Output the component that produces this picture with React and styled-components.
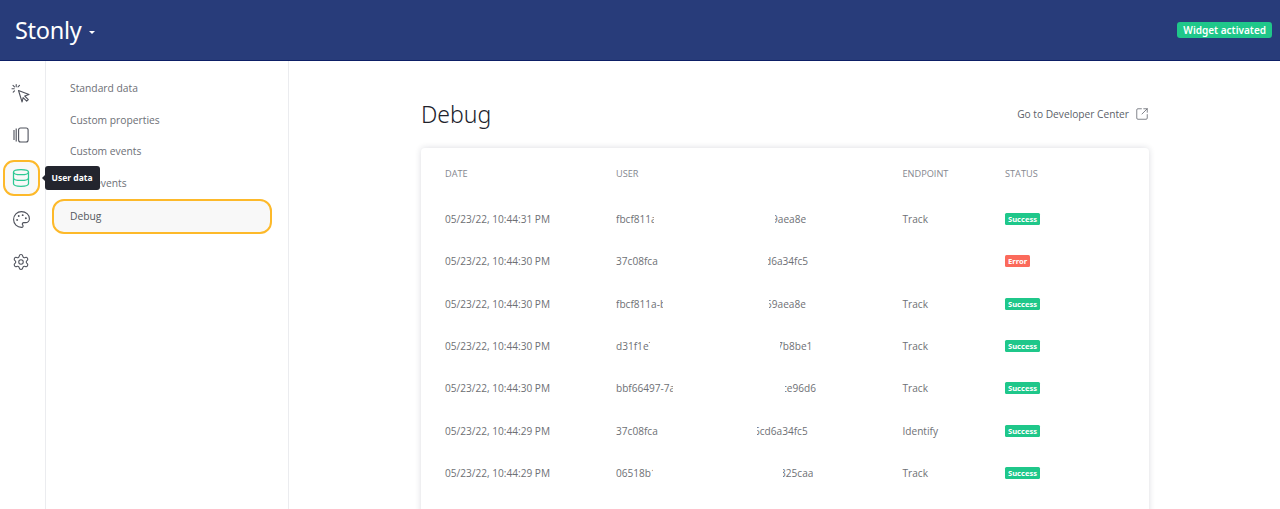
import React from "react";
import styled, { createGlobalStyle } from "styled-components";
import { Database, Palette, Settings, SquareArrowOutUpRight } from "lucide-react";

const rows = [
  { date: "05/23/22, 10:44:31 PM", head: "fbcf811a-b", show: 38, tail: "9aea8e", skip: 56, endpoint: "Track", status: "Success" },
  { date: "05/23/22, 10:44:30 PM", head: "37c08fca", show: 42, tail: "d6a34fc5", skip: 49, endpoint: "", status: "Error" },
  { date: "05/23/22, 10:44:30 PM", head: "fbcf811a-b", show: 47, tail: "59aea8e", skip: 50, endpoint: "Track", status: "Success" },
  { date: "05/23/22, 10:44:30 PM", head: "d31f1e7", show: 34, tail: "7b8be1", skip: 61, endpoint: "Track", status: "Success" },
  { date: "05/23/22, 10:44:30 PM", head: "bbf66497-7a", show: 57, tail: "ce96d6", skip: 66, endpoint: "Track", status: "Success" },
  { date: "05/23/22, 10:44:29 PM", head: "37c08fca", show: 42, tail: "6cd6a34fc5", skip: 38, endpoint: "Identify", status: "Success" },
  { date: "05/23/22, 10:44:29 PM", head: "06518b1", show: 37, tail: "325caa", skip: 64, endpoint: "Track", status: "Success" },
];

const menu = ["Standard data", "Custom properties", "Custom events", "User events"];

const App = () => {
  return (
    <Page>
      <GlobalStyle />
      <Header>
        <Brand>
          Stonly <Caret />
        </Brand>
        <Activated>Widget activated</Activated>
      </Header>
      <Body>
        <Rail>
          <RailButton>
            <svg width="20" height="20" viewBox="0 0 20 20" fill="none" stroke="currentColor" strokeWidth="1.1" strokeLinecap="round" strokeLinejoin="round">
              <path d="M7.5 7.5l10.5 4-4.3 1.5 3.6 3.6-1.6 1.6-3.6-3.6-1 4.4z" />
              <path d="M5.2 1.5v2.2M1 5.8h2.2M2 2.4l1.5 1.5M8.5 2.4L7 3.9M2.2 9.2l1.3-1.3" />
            </svg>
          </RailButton>
          <RailButton>
            <svg width="16" height="16" viewBox="0 0 16 16" fill="none" stroke="currentColor" strokeWidth="1.1">
              <path d="M1 3v10M3.2 1.5v13" />
              <rect x="5.6" y="1" width="9.5" height="14" rx="2" />
            </svg>
          </RailButton>
          <RailButton $active>
            <Database size={20} strokeWidth={1.5} />
            <Tooltip>User data</Tooltip>
          </RailButton>
          <RailButton>
            <Palette size={19} strokeWidth={1.4} />
          </RailButton>
          <RailButton>
            <Settings size={18} strokeWidth={1.4} />
          </RailButton>
        </Rail>
        <SubNav>
          {menu.map((item) => (
            <SubItem key={item}>{item}</SubItem>
          ))}
          <SubItem $active>Debug</SubItem>
        </SubNav>
        <Main>
          <TitleRow>
            <Title>Debug</Title>
            <DevLink>
              Go to Developer Center
              <SquareArrowOutUpRight size={14} strokeWidth={1.3} />
            </DevLink>
          </TitleRow>
          <Card>
            <Row $head>
              <span>DATE</span>
              <span>USER</span>
              <span>ENDPOINT</span>
              <span>STATUS</span>
            </Row>
            {rows.map((row, i) => (
              <Row key={i}>
                <span>{row.date}</span>
                <UserCell>
                  <UserHead $show={row.show}>{row.head}</UserHead>
                  <UserTail $skip={row.skip}>{row.tail}</UserTail>
                </UserCell>
                <span>{row.endpoint}</span>
                <Status $error={row.status === "Error"}>{row.status}</Status>
              </Row>
            ))}
          </Card>
        </Main>
      </Body>
    </Page>
  );
};

const GlobalStyle = createGlobalStyle`
  html, body {
    margin: 0;
    padding: 0;
    background: #fff;
  }
  body {
    font-family: "Open Sans", "Noto Sans", sans-serif;
  }
`;

const Page = styled.div`
  width: 1280px;
  height: 509px;
  overflow: hidden;
  display: flex;
  flex-direction: column;
`;

const Header = styled.header`
  height: 61px;
  box-sizing: border-box;
  flex: none;
  display: flex;
  align-items: center;
  justify-content: space-between;
  padding: 0 8px 0 15px;
  background: #283c7a;
  border-bottom: 1px solid #0d1f66;
`;

const Brand = styled.div`
  display: flex;
  align-items: center;
  gap: 8px;
  font-family: "Noto Sans", sans-serif;
  font-size: 23.5px;
  letter-spacing: -0.3px;
  color: #fff;
`;

const Caret = styled.i`
  width: 0;
  height: 0;
  margin-top: 5px;
  border-left: 3px solid transparent;
  border-right: 3px solid transparent;
  border-top: 3px solid #fff;
`;

const Activated = styled.span`
  height: 16px;
  padding: 0 6px;
  border-radius: 3px;
  background: #1fc78a;
  color: #fff;
  font-family: "Noto Sans", sans-serif;
  font-size: 10px;
  font-weight: 600;
  line-height: 16px;
`;

const Body = styled.div`
  flex: 1;
  display: flex;
  min-height: 0;
`;

const Rail = styled.nav`
  width: 46px;
  flex: none;
  display: flex;
  flex-direction: column;
  align-items: center;
  gap: 6.25px;
  padding: 14px 3px 0 0;
  box-sizing: border-box;
  border-right: 1px solid #ebecef;
`;

const RailButton = styled.button`
  position: relative;
  width: 37px;
  height: 36px;
  flex: none;
  display: flex;
  align-items: center;
  justify-content: center;
  padding: 0;
  box-sizing: border-box;
  border-radius: 11px;
  background: ${(p) => (p.$active ? "#f8f8f8" : "transparent")};
  border: ${(p) => (p.$active ? "2px solid #fdb92a" : "none")};
  color: ${(p) => (p.$active ? "#2cc994" : "#4f525c")};
`;

const Tooltip = styled.span`
  position: absolute;
  left: 40px;
  top: 4px;
  width: 55px;
  height: 24px;
  display: flex;
  align-items: center;
  justify-content: center;
  border-radius: 3px;
  background: #23252e;
  color: #fff;
  font-family: "Noto Sans", sans-serif;
  font-size: 8.5px;
  font-weight: 700;
  &::before {
    content: "";
    position: absolute;
    left: -3px;
    top: 9px;
    border-top: 3px solid transparent;
    border-bottom: 3px solid transparent;
    border-right: 3px solid #23252e;
  }
`;

const SubNav = styled.nav`
  width: 242.5px;
  flex: none;
  display: flex;
  flex-direction: column;
  align-items: stretch;
  padding: 11.5px 15.5px 0 6px;
  box-sizing: border-box;
  border-right: 1px solid #ebecef;
`;

const SubItem = styled.div`
  height: ${(p) => (p.$active ? "35px" : "31.5px")};
  display: flex;
  align-items: center;
  padding-left: ${(p) => (p.$active ? "16px" : "18px")};
  box-sizing: border-box;
  font-size: 10.3px;
  font-weight: 500;
  color: ${(p) => (p.$active ? "#55585f" : "#6d6f76")};
  border-radius: 12px;
  background: ${(p) => (p.$active ? "#f8f8f8" : "transparent")};
  border: ${(p) => (p.$active ? "2px solid #fdb92a" : "none")};
`;

const Main = styled.main`
  flex: 1;
  min-width: 0;
  padding: 0 131px 0 132.5px;
`;

const TitleRow = styled.div`
  height: 87px;
  display: flex;
  align-items: center;
  justify-content: space-between;
  padding-top: 18px;
  box-sizing: border-box;
`;

const Title = styled.h1`
  margin: 0;
  font-family: "Noto Sans", sans-serif;
  font-size: 23px;
  font-weight: 300;
  color: #20222b;
`;

const DevLink = styled.a`
  display: flex;
  align-items: center;
  gap: 6px;
  font-size: 10.2px;
  font-weight: 500;
  color: #5c5f69;
`;

const Card = styled.section`
  padding: 4px 24px 60px;
  border-radius: 4px;
  background: #fff;
  box-shadow: 0 0 6px rgba(30, 35, 60, 0.16);
`;

const Row = styled.div`
  display: grid;
  grid-template-columns: 171px 286.5px 102.5px 1fr;
  align-items: center;
  height: ${(p) => (p.$head ? "42px" : "42.33px")};
  margin-bottom: ${(p) => (p.$head ? "4px" : "0")};
  font-size: ${(p) => (p.$head ? "9.2px" : "10.1px")};
  color: ${(p) => (p.$head ? "#85878f" : "#6e7075")};
  white-space: nowrap;
`;

const UserCell = styled.span`
  display: flex;
`;

const UserHead = styled.span`
  width: 100px;
  flex: none;
  clip-path: inset(0 ${(p) => 100 - p.$show}px 0 0);
`;

const UserTail = styled.span`
  margin-left: ${(p) => p.$skip}px;
  clip-path: inset(0 0 0 3px);
`;

const Status = styled.span`
  justify-self: start;
  height: 12px;
  padding: 0 3px;
  border-radius: 1.5px;
  background: ${(p) => (p.$error ? "#fb6a5b" : "#1fc78a")};
  color: #fff;
  font-family: "Noto Sans", sans-serif;
  font-size: 7.6px;
  font-weight: 700;
  line-height: 12px;
`;

export default App;
